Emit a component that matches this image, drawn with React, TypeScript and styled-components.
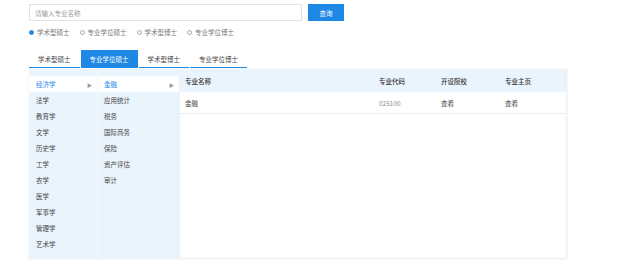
import React, { useState } from "react";
import styled, { createGlobalStyle } from "styled-components";

const blue = "#1e88e5";
const paleBlue = "#eaf4fd";

const GlobalStyle = createGlobalStyle`
  html, body {
    margin: 0;
    padding: 0;
    background: #fff;
    font-family: "Noto Sans CJK SC", "Noto Sans", sans-serif;
    font-size: 6.5px;
    color: #444;
  }
`;

const Page = styled.div`
  width: 640px;
  height: 262px;
  padding: 4px 0 0 29px;
  box-sizing: border-box;
  overflow: hidden;
`;

const SearchRow = styled.div`
  display: flex;
  gap: 6px;
  height: 17px;
`;

const SearchInput = styled.input`
  width: 273px;
  height: 17px;
  box-sizing: border-box;
  border: 1px solid #e2e2e2;
  padding: 0 5px;
  font: inherit;
  outline: none;
  &::placeholder {
    color: #999;
  }
`;

const SearchButton = styled.button`
  width: 36px;
  height: 17px;
  border: none;
  background: ${blue};
  color: #fff;
  font: inherit;
  padding: 0;
`;

const RadioRow = styled.div`
  display: flex;
  align-items: center;
  height: 10px;
  margin-top: 6px;
`;

const RadioItem = styled.label`
  display: flex;
  align-items: center;
  gap: 2px;
  margin-right: 10px;
  color: #777;
  line-height: 10px;
`;

const RadioDot = styled.span<{ checked?: boolean }>`
  width: 5px;
  height: 5px;
  box-sizing: border-box;
  border-radius: 50%;
  border: 1px solid ${(p) => (p.checked ? blue : "#aaa")};
  background: ${(p) => (p.checked ? blue : "#fff")};
  margin-right: 1px;
`;

const TabBar = styled.div`
  display: flex;
  margin-top: 13px;
  gap: 1px;
`;

const Tab = styled.div<{ active?: boolean }>`
  height: 18px;
  padding: 0 9px;
  display: flex;
  align-items: center;
  box-sizing: border-box;
  border-bottom: 1px solid ${blue};
  background: ${(p) => (p.active ? blue : "transparent")};
  color: ${(p) => (p.active ? "#fff" : "#444")};
  cursor: pointer;
`;

const Panel = styled.div`
  display: flex;
  width: 538px;
  height: 189px;
  margin-top: 1px;
  background: ${paleBlue};
  box-shadow: 0 1px 2px rgba(0, 0, 0, 0.08);
`;

const Column = styled.div<{ width: number }>`
  width: ${(p) => p.width}px;
  padding-top: 7px;
  border-right: 1px solid #f6fbff;
  box-sizing: border-box;
`;

const ColItem = styled.div<{ active?: boolean; indent: number }>`
  height: 16px;
  display: flex;
  align-items: center;
  justify-content: space-between;
  padding: 0 5px 0 ${(p) => p.indent}px;
  background: ${(p) => (p.active ? "#fff" : "transparent")};
  color: ${(p) => (p.active ? blue : "#444")};
  cursor: pointer;
`;

const Arrow = styled.span`
  color: #999;
  font-size: 5px;
`;

const TableWrap = styled.div`
  flex: 1;
  background: #fff;
  border-right: 1px solid #eee;
  box-shadow: -1px 0 2px rgba(0, 0, 0, 0.05);
`;

const Table = styled.div`
  display: grid;
  grid-template-columns: 194px 62px 64px 1fr;
`;

const HeadCell = styled.div`
  height: 23px;
  display: flex;
  align-items: center;
  padding-left: 5px;
  background: ${paleBlue};
  color: #333;
  font-weight: 500;
`;

const Cell = styled.div<{ muted?: boolean }>`
  height: 21px;
  display: flex;
  align-items: center;
  padding-left: 5px;
  border-bottom: 1px solid #eee;
  color: ${(p) => (p.muted ? "#888" : "#444")};
`;

const subjects = ["经济学", "法学", "教育学", "文学", "历史学", "工学", "农学", "医学", "军事学", "管理学", "艺术学"];
const majors = ["金融", "应用统计", "税务", "国际商务", "保险", "资产评估", "审计"];
const tabs = ["学术型硕士", "专业学位硕士", "学术型博士", "专业学位博士"];

export default function App() {
  const [subject, setSubject] = useState(0);
  const [major, setMajor] = useState(0);
  const [tab, setTab] = useState(1);

  return (
    <Page>
      <GlobalStyle />
      <SearchRow>
        <SearchInput placeholder="请输入专业名称" />
        <SearchButton>查询</SearchButton>
      </SearchRow>
      <RadioRow>
        {tabs.map((t, i) => (
          <RadioItem key={t}>
            <RadioDot checked={i === 0} />
            {t}
          </RadioItem>
        ))}
      </RadioRow>
      <TabBar>
        {tabs.map((t, i) => (
          <Tab key={t} active={i === tab} onClick={() => setTab(i)}>
            {t}
          </Tab>
        ))}
      </TabBar>
      <Panel>
        <Column width={69}>
          {subjects.map((s, i) => (
            <ColItem key={s} indent={7} active={i === subject} onClick={() => setSubject(i)}>
              {s}
              {i === subject && <Arrow>▶</Arrow>}
            </ColItem>
          ))}
        </Column>
        <Column width={82}>
          {majors.map((m, i) => (
            <ColItem key={m} indent={6} active={i === major} onClick={() => setMajor(i)}>
              {m}
              {i === major && <Arrow>▶</Arrow>}
            </ColItem>
          ))}
        </Column>
        <TableWrap>
          <Table>
            <HeadCell>专业名称</HeadCell>
            <HeadCell>专业代码</HeadCell>
            <HeadCell>开设院校</HeadCell>
            <HeadCell>专业主页</HeadCell>
            <Cell>金融</Cell>
            <Cell muted>025100</Cell>
            <Cell>查看</Cell>
            <Cell>查看</Cell>
          </Table>
        </TableWrap>
      </Panel>
    </Page>
  );
}
